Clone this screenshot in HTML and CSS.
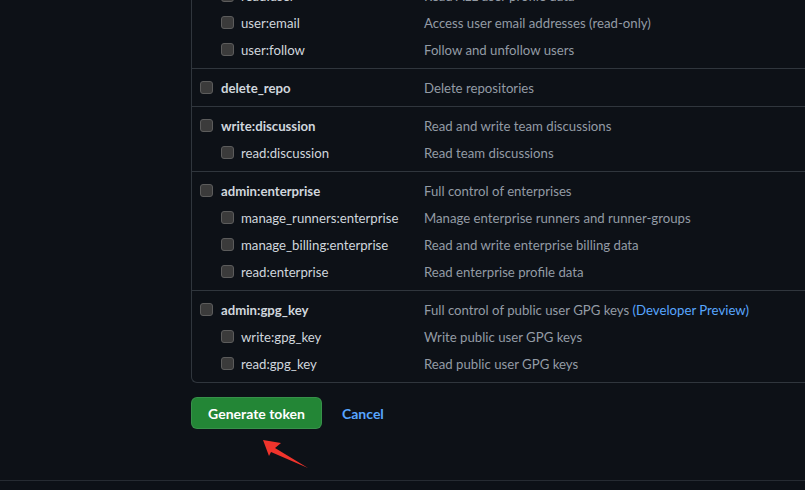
FILE: index.html
```html
<!DOCTYPE html>
<html>
<head>
<meta charset="utf-8">
<link rel="stylesheet" href="styles.css">
</head>
<body>
<div class="page">
  <div class="scopes">
    <div class="group">
      <div class="row top"><span class="cb"></span><span class="name">user</span><span class="desc">Update ALL user data</span></div>
      <div class="row sub"><span class="cb"></span><span class="name">read:user</span><span class="desc">Read ALL user profile data</span></div>
      <div class="row sub"><span class="cb"></span><span class="name">user:email</span><span class="desc">Access user email addresses (read-only)</span></div>
      <div class="row sub"><span class="cb"></span><span class="name">user:follow</span><span class="desc">Follow and unfollow users</span></div>
    </div>
    <div class="group">
      <div class="row top"><span class="cb"></span><span class="name">delete_repo</span><span class="desc">Delete repositories</span></div>
    </div>
    <div class="group">
      <div class="row top"><span class="cb"></span><span class="name">write:discussion</span><span class="desc">Read and write team discussions</span></div>
      <div class="row sub"><span class="cb"></span><span class="name">read:discussion</span><span class="desc">Read team discussions</span></div>
    </div>
    <div class="group">
      <div class="row top"><span class="cb"></span><span class="name">admin:enterprise</span><span class="desc">Full control of enterprises</span></div>
      <div class="row sub"><span class="cb"></span><span class="name">manage_runners:enterprise</span><span class="desc">Manage enterprise runners and runner-groups</span></div>
      <div class="row sub"><span class="cb"></span><span class="name">manage_billing:enterprise</span><span class="desc">Read and write enterprise billing data</span></div>
      <div class="row sub"><span class="cb"></span><span class="name">read:enterprise</span><span class="desc">Read enterprise profile data</span></div>
    </div>
    <div class="group">
      <div class="row top"><span class="cb"></span><span class="name">admin:gpg_key</span><span class="desc">Full control of public user GPG keys <a class="preview">(Developer Preview)</a></span></div>
      <div class="row sub"><span class="cb"></span><span class="name">write:gpg_key</span><span class="desc">Write public user GPG keys</span></div>
      <div class="row sub"><span class="cb"></span><span class="name">read:gpg_key</span><span class="desc">Read public user GPG keys</span></div>
    </div>
  </div>
  <div class="actions">
    <button class="btn-primary">Generate token</button>
    <a class="cancel">Cancel</a>
  </div>
</div>
<div class="footer"></div>
<svg class="arrow" width="805" height="490" viewBox="0 0 805 490">
  <polygon points="263,440 281,443 275,448 308,468 271,452 269,456" fill="#f0342c"/>
</svg>
</body>
</html>
```
FILE: styles.css
```css
html, body {
  margin: 0;
  padding: 0;
  background: #0d1117;
  overflow: hidden;
}
body {
  width: 805px;
  height: 490px;
  position: relative;
  font-family: Lato, "Noto Sans", "Liberation Sans", sans-serif;
  font-size: 13.2px;
  color: #c9d1d9;
}
.page {
  display: flow-root;
  padding-left: 191px;
  height: 480px;
}
.scopes {
  margin-top: -51px;
  border: 1px solid #30363d;
  border-right: none;
  border-radius: 0 0 0 6px;
}
.group {
  padding: 5px 0;
  border-bottom: 1px solid #30363d;
}
.group:last-child {
  border-bottom: none;
}
.row {
  display: grid;
  grid-template-columns: 232px 1fr;
  height: 27px;
  align-items: center;
  position: relative;
}
.row .cb {
  position: absolute;
  top: 7px;
  width: 11px;
  height: 11px;
  border: 1px solid #5c5c5c;
  background: #3b3b3b;
  border-radius: 3px;
}
.row.top .cb { left: 8px; }
.row.sub .cb { left: 29px; }
.name {
  white-space: nowrap;
  color: #d0d6dd;
}
.row.top .name {
  padding-left: 29px;
  font-weight: 700;
}
.row.sub .name {
  padding-left: 49px;
}
.desc {
  color: #939ba5;
  white-space: nowrap;
}
.preview {
  color: #58a6ff;
}
.actions {
  display: flex;
  align-items: center;
  gap: 20px;
  margin-top: 14px;
}
.btn-primary {
  width: 131px;
  height: 32px;
  background: #238636;
  border: 1px solid rgba(240, 246, 252, 0.1);
  border-radius: 6px;
  color: #ffffff;
  font-family: inherit;
  font-size: 14px;
  font-weight: 700;
  padding: 0;
}
.cancel {
  color: #58a6ff;
  font-weight: 700;
  font-size: 14px;
}
.footer {
  border-top: 1px solid #262b32;
  height: 9px;
}
.arrow {
  position: absolute;
  left: 0;
  top: 0;
  pointer-events: none;
}
```
